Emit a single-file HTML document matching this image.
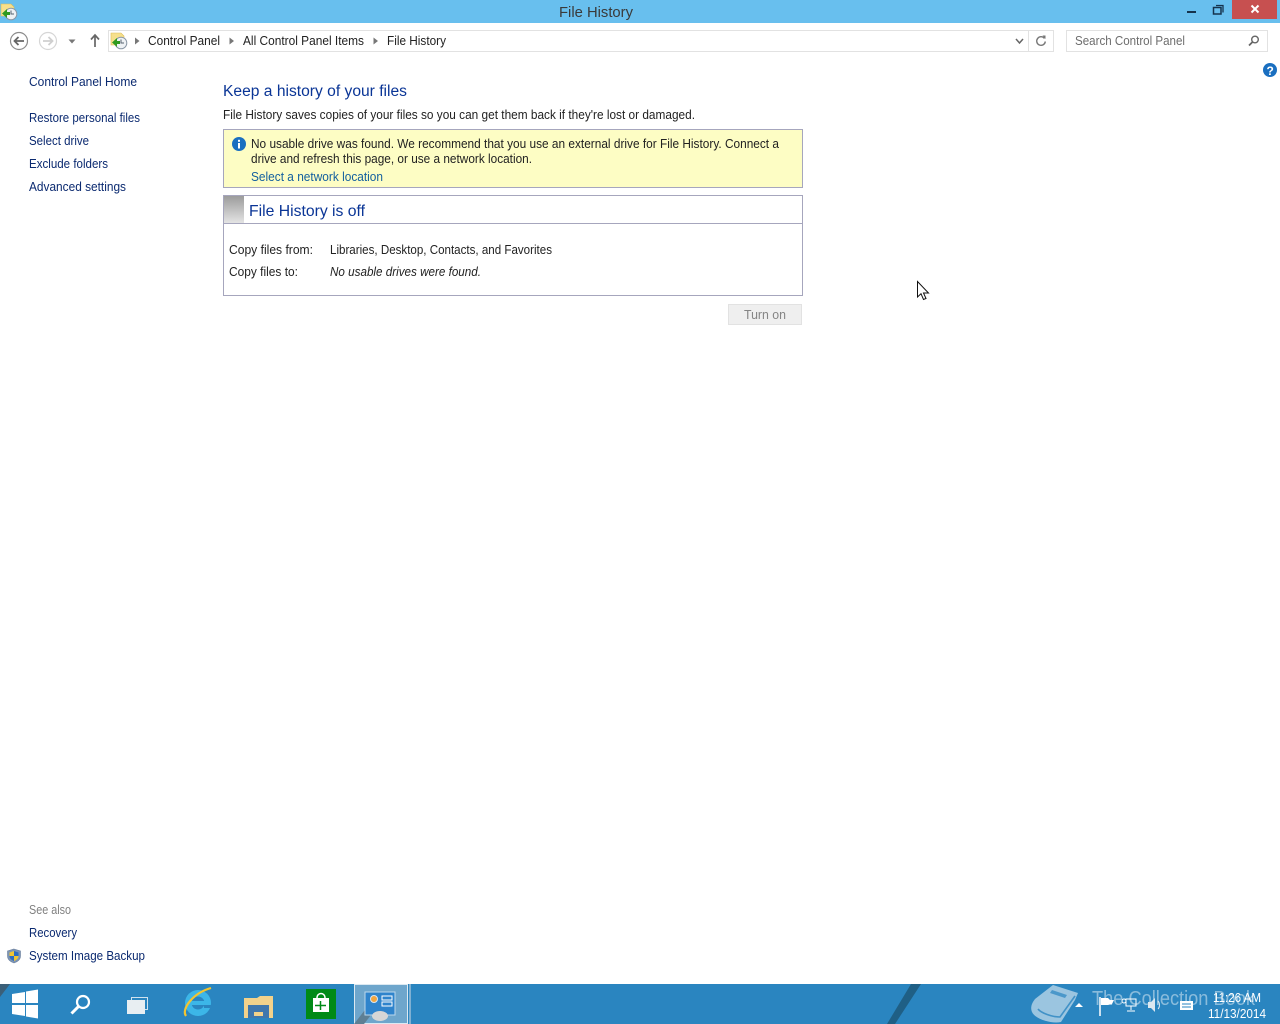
<!DOCTYPE html>
<html><head><meta charset="utf-8"><title>File History</title>
<style>
html,body{margin:0;padding:0;background:#fff;width:1280px;height:1024px;overflow:hidden}
svg{display:block}
text{font-family:"Liberation Sans",sans-serif;font-size:12.5px;fill:#222}
.l{fill:#0b2a70}
.h{fill:#0a3596}
</style></head><body>
<svg width="1280" height="1024" viewBox="0 0 1280 1024" xmlns="http://www.w3.org/2000/svg">
<defs>
<linearGradient id="g" x1="0" y1="0" x2="0" y2="1"><stop offset="0" stop-color="#9c9c9c"/><stop offset="1" stop-color="#e4e4e4"/></linearGradient>
<g id="fh">
<path d="M0 0h10l3 3v9H0z" fill="#f6e08c" stroke="#dcbc58" stroke-width=".6"/>
<circle cx="10" cy="10" r="5.800" fill="#eef1f4" stroke="#8a97a5"/>
<path d="M10 6.500V10h3" fill="none" stroke="#56636f"/>
<path d="M1 9.500L6 5v3h3v3H6v3z" fill="#2f9a1f"/>
</g>
</defs>
<!-- title bar -->
<rect width="1280" height="23" fill="#68bfee"/>
<use href="#fh" x="1" y="4"/>
<text x="559" y="17" textLength="74" lengthAdjust="spacingAndGlyphs" style="font-size:14.500px;fill:#3a3a3a">File History</text>
<rect x="1187" y="11" width="9" height="2" fill="#15334d"/>
<path d="M1216 5.500h7v7" fill="none" stroke="#15334d" stroke-width="1.300"/>
<rect x="1213.500" y="7.500" width="7.500" height="6.500" fill="none" stroke="#15334d" stroke-width="1.500"/>
<rect x="1232" y="0" width="45" height="19" fill="#c75050"/>
<path d="M1251.500 5.500l7 7M1258.500 5.500l-7 7" stroke="#fff" stroke-width="2"/>
<!-- nav -->
<circle cx="19" cy="41" r="8.500" fill="none" stroke="#8c8c8c" stroke-width="1.200"/>
<path d="M24 41H15M18.500 37L14.500 41l4 4" fill="none" stroke="#666" stroke-width="1.800"/>
<circle cx="48" cy="41" r="8.500" fill="none" stroke="#d6d6d6" stroke-width="1.200"/>
<path d="M43 41H52M48.500 37L52.500 41l-4 4" fill="none" stroke="#cfcfcf" stroke-width="1.800"/>
<path d="M68.500 39.500h7l-3.500 4z" fill="#777"/>
<path d="M95 47V36M91 39.500L95 35l4 4.500" fill="none" stroke="#666" stroke-width="1.700"/>
<rect x="108.500" y="30.500" width="945" height="21" fill="#fff" stroke="#e2e2e2"/>
<path d="M1028.500 31v20" stroke="#e2e2e2"/>
<use href="#fh" x="111" y="33"/>
<path d="M135 37.500l4.500 3.500-4.500 3.500z" fill="#777"/>
<text x="148" y="45" textLength="72" lengthAdjust="spacingAndGlyphs">Control Panel</text>
<path d="M229.500 37.500l4.500 3.500-4.500 3.500z" fill="#777"/>
<text x="243" y="45" textLength="121" lengthAdjust="spacingAndGlyphs">All Control Panel Items</text>
<path d="M373.500 37.500l4.500 3.500-4.500 3.500z" fill="#777"/>
<text x="387" y="45" textLength="59" lengthAdjust="spacingAndGlyphs">File History</text>
<path d="M1016 39l3.500 4 3.500-4" fill="none" stroke="#666" stroke-width="1.500"/>
<path d="M1044.500 38.500a4.300 4.300 0 1 0 .8 3" fill="none" stroke="#777" stroke-width="1.400"/>
<path d="M1042.500 35.500l3 0v3.500z" fill="#777"/>
<rect x="1066.500" y="30.500" width="201" height="21" fill="#fff" stroke="#e2e2e2"/>
<text x="1075" y="45" textLength="110" lengthAdjust="spacingAndGlyphs" style="fill:#6d6d6d">Search Control Panel</text>
<circle cx="1255" cy="39.500" r="3.300" fill="none" stroke="#666" stroke-width="1.400"/>
<path d="M1252.500 42l-3.500 3.500" stroke="#666" stroke-width="1.800"/>
<!-- help -->
<circle cx="1270" cy="70" r="7" fill="#1a6fc0"/>
<text x="1266.500" y="75" style="font-size:12px;font-weight:bold;fill:#fff">?</text>
<!-- left nav -->
<text class="l" x="29" y="86" textLength="108" lengthAdjust="spacingAndGlyphs">Control Panel Home</text>
<text class="l" x="29" y="122" textLength="111" lengthAdjust="spacingAndGlyphs">Restore personal files</text>
<text class="l" x="29" y="145" textLength="60" lengthAdjust="spacingAndGlyphs">Select drive</text>
<text class="l" x="29" y="168" textLength="79" lengthAdjust="spacingAndGlyphs">Exclude folders</text>
<text class="l" x="29" y="191" textLength="97" lengthAdjust="spacingAndGlyphs">Advanced settings</text>
<text x="29" y="914" textLength="42" lengthAdjust="spacingAndGlyphs" style="fill:#808080">See also</text>
<text class="l" x="29" y="937" textLength="48" lengthAdjust="spacingAndGlyphs">Recovery</text>
<path d="M14 949l6.500 2v5c0 3.500-3 6-6.500 7-3.500-1-6.500-3.500-6.500-7v-5z" fill="#7d95b5" stroke="#6a7f9c" stroke-width=".6"/>
<path d="M14 951v5h-4.500v-3.500zM14 956h4.500c0 2.500-2 4-4.500 5z" fill="#f2c531"/>
<path d="M14 951l4.500 1.500V956H14zM14 956v5c-2.500-1-4.500-2.500-4.500-5z" fill="#2d6cc0"/>
<text class="l" x="29" y="960" textLength="116" lengthAdjust="spacingAndGlyphs">System Image Backup</text>
<!-- main -->
<text class="h" x="223" y="96" textLength="184" lengthAdjust="spacingAndGlyphs" style="font-size:15.500px">Keep a history of your files</text>
<text x="223" y="119" textLength="472" lengthAdjust="spacingAndGlyphs">File History saves copies of your files so you can get them back if they're lost or damaged.</text>
<rect x="223.500" y="129.500" width="579" height="58" fill="#fdfdc4" stroke="#a6a6bd"/>
<circle cx="239" cy="144" r="7" fill="#1a6fc0"/>
<rect x="238" y="143" width="2" height="5.500" fill="#fff"/><rect x="238" y="139.800" width="2" height="2" fill="#fff"/>
<text x="251" y="148" textLength="528" lengthAdjust="spacingAndGlyphs">No usable drive was found. We recommend that you use an external drive for File History. Connect a</text>
<text x="251" y="163" textLength="281" lengthAdjust="spacingAndGlyphs">drive and refresh this page, or use a network location.</text>
<text x="251" y="181" textLength="132" lengthAdjust="spacingAndGlyphs" style="fill:#14609f">Select a network location</text>
<rect x="223.500" y="195.500" width="579" height="100" fill="#fff" stroke="#a6a6bd"/>
<path d="M224 223.500h578" stroke="#a6a6bd"/>
<rect x="224" y="196" width="20" height="27" fill="url(#g)"/>
<text class="h" x="249" y="216" textLength="116" lengthAdjust="spacingAndGlyphs" style="font-size:16px">File History is off</text>
<text x="229" y="254" textLength="84" lengthAdjust="spacingAndGlyphs">Copy files from:</text>
<text x="330" y="254" textLength="222" lengthAdjust="spacingAndGlyphs">Libraries, Desktop, Contacts, and Favorites</text>
<text x="229" y="276" textLength="69" lengthAdjust="spacingAndGlyphs">Copy files to:</text>
<text x="330" y="276" textLength="151" lengthAdjust="spacingAndGlyphs" style="font-style:italic">No usable drives were found.</text>
<rect x="728.500" y="304.500" width="73" height="20" fill="#efefef" stroke="#e2e2e2"/>
<text x="744" y="319" textLength="42" lengthAdjust="spacingAndGlyphs" style="fill:#858585">Turn on</text>
<!-- cursor -->
<path d="M917.500 281.500v15.500l3.500-3.300 2.500 5.800 2.500-1-2.500-5.500h5z" fill="#fff" stroke="#111" stroke-width="1"/>
<!-- taskbar -->
<rect x="0" y="984" width="1280" height="40" fill="#2a85c0"/>
<path d="M0 984h10L0 997z" fill="#3b5f78"/>
<path d="M887 1024l24-40h10l-26 40z" fill="#1f5f85"/>
<path d="M12 994l13-2v11H12zM26 991.500l12-2V1003H26zM12 1005h13v11l-13-2zM26 1005h12v13.500l-12-2z" fill="#fff"/>
<circle cx="83" cy="1002" r="6" fill="none" stroke="#fff" stroke-width="2.200"/>
<path d="M78.500 1006.500l-7 7" stroke="#fff" stroke-width="3"/>
<rect x="131.500" y="997.500" width="16" height="12" fill="none" stroke="#cfe2ee" stroke-width="1"/>
<rect x="127" y="1000" width="18" height="14" fill="#e8eef2"/>
<circle cx="198" cy="1003" r="13" fill="#3cb6e8"/>
<circle cx="198" cy="1003" r="6.500" fill="#2a85c0"/>
<rect x="190" y="1001" width="17" height="4" fill="#3cb6e8"/>
<rect x="204" y="1005" width="8" height="3" fill="#2a85c0"/>
<path d="M186 1016c-5-7 7-23 25-28" fill="none" stroke="#f2c531" stroke-width="2.200"/>
<path d="M244 998h13l3-2h13v22h-29z" fill="#f2d28b"/>
<rect x="248" y="1005" width="21" height="13" fill="#3f77ad"/>
<rect x="254" y="1012" width="9" height="4" fill="#f2d28b"/>
<rect x="306" y="989" width="30" height="30" fill="#008a17"/>
<path d="M313 998h16v14h-16z" fill="#fff"/>
<path d="M317 998c0-6 8-6 8 0" fill="none" stroke="#fff" stroke-width="1.500"/>
<path d="M320.500 1001v9M315 1005.500h11" stroke="#008a17" stroke-width="1.500"/>
<rect x="354" y="984" width="54" height="40" fill="#6ea6cc"/>
<rect x="354.500" y="984.500" width="53" height="39" fill="none" stroke="#dbe9f2"/>
<rect x="409" y="984" width="2" height="40" fill="#7fb0d2"/>
<path d="M354 1024l14-18h10l-14 18z" fill="#5e7f94"/>
<rect x="365" y="992" width="30" height="23" fill="#2f84cc" stroke="#bcd8ec"/>
<circle cx="374" cy="999" r="3.500" fill="#f2a640" stroke="#d8e6f2"/>
<rect x="382" y="996" width="10" height="4" fill="none" stroke="#fff"/>
<rect x="382" y="1002" width="10" height="4" fill="none" stroke="#fff"/>
<ellipse cx="380" cy="1016" rx="8" ry="5" fill="#d6d6d6"/>
<!-- watermark -->
<path d="M1053 985l25 8-3 7-14 22c-10 2-26-3-29-10-2-5 0-9 3-13z" fill="#a7cce3" opacity=".9"/>
<path d="M1052 990l15 5-2 3-15-5z" fill="#2a85c0" opacity=".7"/>
<path d="M1038 1009c3 4 14 8 22 8l15-21" fill="none" stroke="#2a85c0" stroke-width="1.600" opacity=".8"/>
<text x="1092" y="1005" textLength="163" lengthAdjust="spacingAndGlyphs" style="font-size:20px;fill:#fff;fill-opacity:.45">The Collection Book</text>
<!-- tray -->
<path d="M1075 1007l4-4 4 4z" fill="#fff"/>
<path d="M1100 997v19" stroke="#fff" stroke-width="1.500"/>
<path d="M1101 998h7l2 2h4l-2 4-4 1h-7z" fill="#fff"/>
<rect x="1126" y="999" width="10" height="7" fill="none" stroke="#fff"/>
<circle cx="1124" cy="1001" r="2" fill="none" stroke="#fff"/>
<path d="M1131 1006v4M1127 1011h8" stroke="#fff"/>
<path d="M1148 1002h3l4-4v14l-4-4h-3z" fill="#dbe8f0"/>
<path d="M1158 1001c2 2 2 6 0 8" fill="none" stroke="#dbe8f0"/>
<rect x="1180" y="1001" width="13" height="9" fill="#fff"/>
<path d="M1182 1004h9M1182 1007h9" stroke="#2a85c0"/>
<text x="1213" y="1002" textLength="48" lengthAdjust="spacingAndGlyphs" style="fill:#fff">11:26 AM</text>
<text x="1208" y="1018" textLength="58" lengthAdjust="spacingAndGlyphs" style="fill:#fff">11/13/2014</text>
</svg>
</body></html>
